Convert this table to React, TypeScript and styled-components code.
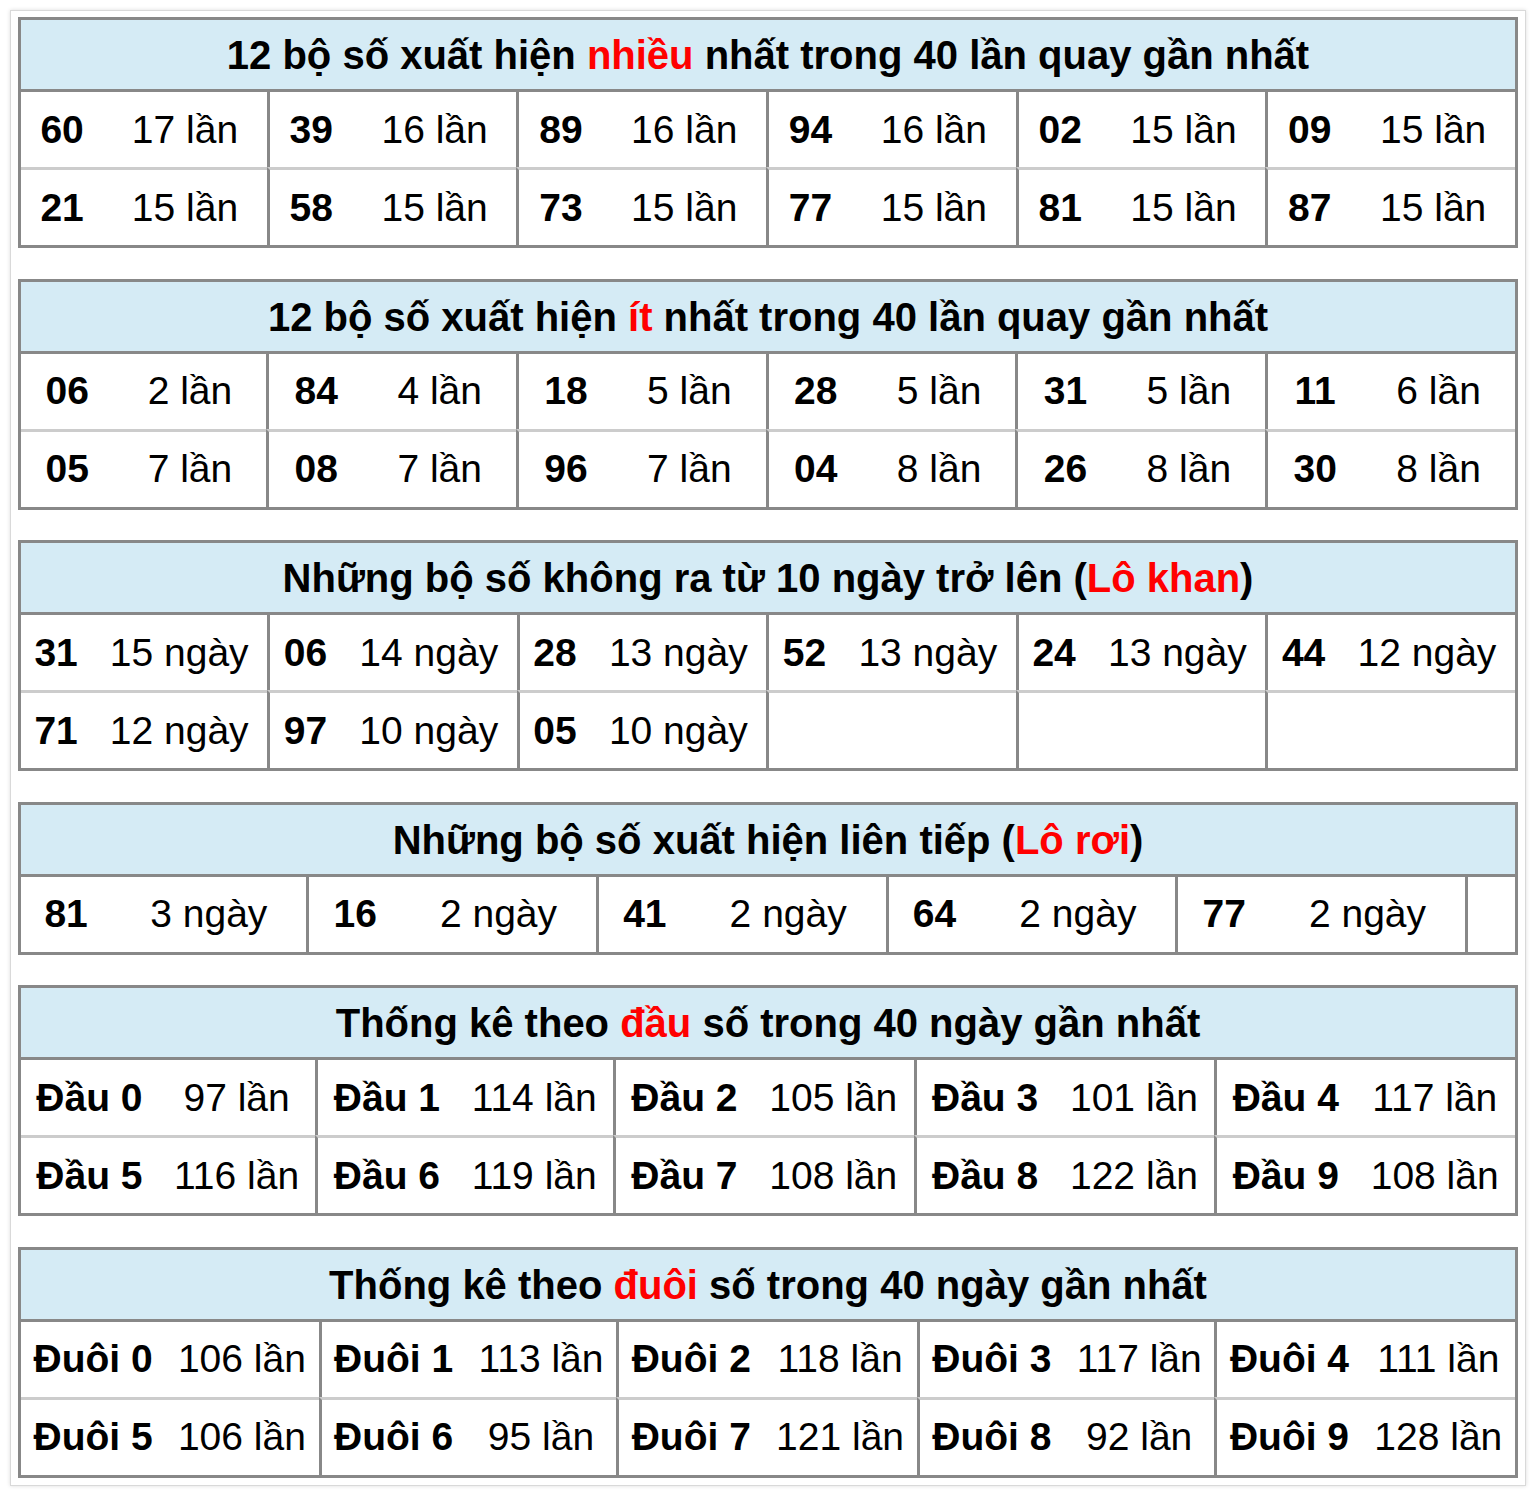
import React from "react";
import styled, { createGlobalStyle } from "styled-components";

const GlobalStyle = createGlobalStyle`
  html, body {
    margin: 0;
    padding: 0;
    background: #ffffff;
  }
  body {
    font-family: "Liberation Sans", Arial, Helvetica, sans-serif;
    color: #000;
  }
`;

const Sheet = styled.div`
  margin: 10px;
  padding: 6px 7px 7px;
  background: #fff;
  border: 1px solid #d9d9d9;
  box-shadow: 0 0 4px rgba(0, 0, 0, 0.14);
`;

const StatTable = styled.table`
  width: 100%;
  border-collapse: separate;
  border-spacing: 0;
  border: 3px solid #888888;
  margin: 0 0 30.5px;
  &:last-child {
    margin-bottom: 0;
  }
`;

const HeaderCell = styled.th`
  height: 67px;
  padding: 2px 10px 0;
  background: #d5ebf5;
  border-bottom: 3px solid #888888;
  font-size: 40px;
  font-weight: 700;
  text-align: center;
  vertical-align: middle;
  white-space: nowrap;
`;

const Hot = styled.span`
  color: #ff0000;
`;

const Row = styled.tr<{ $first: boolean }>`
  & > td {
    border-top: ${(p) => (p.$first ? "none" : "3px solid #cccccc")};
  }
`;

const NumCell = styled.td<{ $lead: boolean; $empty: boolean }>`
  height: 75px;
  padding: ${(p) => (p.$empty ? "0 8px" : "0 10px")};
  border-left: ${(p) => (p.$lead ? "none" : "3px solid #888888")};
  font-size: 39px;
  font-weight: 700;
  text-align: center;
  vertical-align: middle;
  white-space: nowrap;
`;

const CountCell = styled.td<{ $empty: boolean }>`
  height: 75px;
  padding: ${(p) => (p.$empty ? "0 8px" : "0 10px")};
  font-size: 39px;
  font-weight: 400;
  text-align: center;
  vertical-align: middle;
  white-space: nowrap;
`;

type Pair = [string, string] | null;

type Block = {
  title: React.ReactNode;
  rows: Pair[][];
};

const blocks: Block[] = [
  {
    title: (
      <>
        12 bộ số xuất hiện <Hot>nhiều</Hot> nhất trong 40 lần quay gần nhất
      </>
    ),
    rows: [
      [
        ["60", "17 lần"],
        ["39", "16 lần"],
        ["89", "16 lần"],
        ["94", "16 lần"],
        ["02", "15 lần"],
        ["09", "15 lần"],
      ],
      [
        ["21", "15 lần"],
        ["58", "15 lần"],
        ["73", "15 lần"],
        ["77", "15 lần"],
        ["81", "15 lần"],
        ["87", "15 lần"],
      ],
    ],
  },
  {
    title: (
      <>
        12 bộ số xuất hiện <Hot>ít</Hot> nhất trong 40 lần quay gần nhất
      </>
    ),
    rows: [
      [
        ["06", "2 lần"],
        ["84", "4 lần"],
        ["18", "5 lần"],
        ["28", "5 lần"],
        ["31", "5 lần"],
        ["11", "6 lần"],
      ],
      [
        ["05", "7 lần"],
        ["08", "7 lần"],
        ["96", "7 lần"],
        ["04", "8 lần"],
        ["26", "8 lần"],
        ["30", "8 lần"],
      ],
    ],
  },
  {
    title: (
      <>
        Những bộ số không ra từ 10 ngày trở lên (<Hot>Lô khan</Hot>)
      </>
    ),
    rows: [
      [
        ["31", "15 ngày"],
        ["06", "14 ngày"],
        ["28", "13 ngày"],
        ["52", "13 ngày"],
        ["24", "13 ngày"],
        ["44", "12 ngày"],
      ],
      [["71", "12 ngày"], ["97", "10 ngày"], ["05", "10 ngày"], null, null, null],
    ],
  },
  {
    title: (
      <>
        Những bộ số xuất hiện liên tiếp (<Hot>Lô rơi</Hot>)
      </>
    ),
    rows: [
      [
        ["81", "3 ngày"],
        ["16", "2 ngày"],
        ["41", "2 ngày"],
        ["64", "2 ngày"],
        ["77", "2 ngày"],
        null,
      ],
    ],
  },
  {
    title: (
      <>
        Thống kê theo <Hot>đầu</Hot> số trong 40 ngày gần nhất
      </>
    ),
    rows: [
      [
        ["Đầu 0", "97 lần"],
        ["Đầu 1", "114 lần"],
        ["Đầu 2", "105 lần"],
        ["Đầu 3", "101 lần"],
        ["Đầu 4", "117 lần"],
      ],
      [
        ["Đầu 5", "116 lần"],
        ["Đầu 6", "119 lần"],
        ["Đầu 7", "108 lần"],
        ["Đầu 8", "122 lần"],
        ["Đầu 9", "108 lần"],
      ],
    ],
  },
  {
    title: (
      <>
        Thống kê theo <Hot>đuôi</Hot> số trong 40 ngày gần nhất
      </>
    ),
    rows: [
      [
        ["Đuôi 0", "106 lần"],
        ["Đuôi 1", "113 lần"],
        ["Đuôi 2", "118 lần"],
        ["Đuôi 3", "117 lần"],
        ["Đuôi 4", "111 lần"],
      ],
      [
        ["Đuôi 5", "106 lần"],
        ["Đuôi 6", "95 lần"],
        ["Đuôi 7", "121 lần"],
        ["Đuôi 8", "92 lần"],
        ["Đuôi 9", "128 lần"],
      ],
    ],
  },
];

function StatBlock({ block }: { block: Block }) {
  const cols = block.rows[0].length * 2;
  // a column slot is "empty" only when no row has an entry in it
  const emptyCol = block.rows[0].map((_, ci) => block.rows.every((r) => r[ci] === null));
  return (
    <StatTable>
      <thead>
        <tr>
          <HeaderCell colSpan={cols}>{block.title}</HeaderCell>
        </tr>
      </thead>
      <tbody>
        {block.rows.map((row, ri) => (
          <Row key={ri} $first={ri === 0}>
            {row.map((pair, ci) => (
              <React.Fragment key={ci}>
                <NumCell $lead={ci === 0} $empty={emptyCol[ci]}>
                  {pair ? pair[0] : ""}
                </NumCell>
                <CountCell $empty={emptyCol[ci]}>{pair ? pair[1] : ""}</CountCell>
              </React.Fragment>
            ))}
          </Row>
        ))}
      </tbody>
    </StatTable>
  );
}

export default function App() {
  return (
    <>
      <GlobalStyle />
      <Sheet>
        {blocks.map((b, i) => (
          <StatBlock key={i} block={b} />
        ))}
      </Sheet>
    </>
  );
}
